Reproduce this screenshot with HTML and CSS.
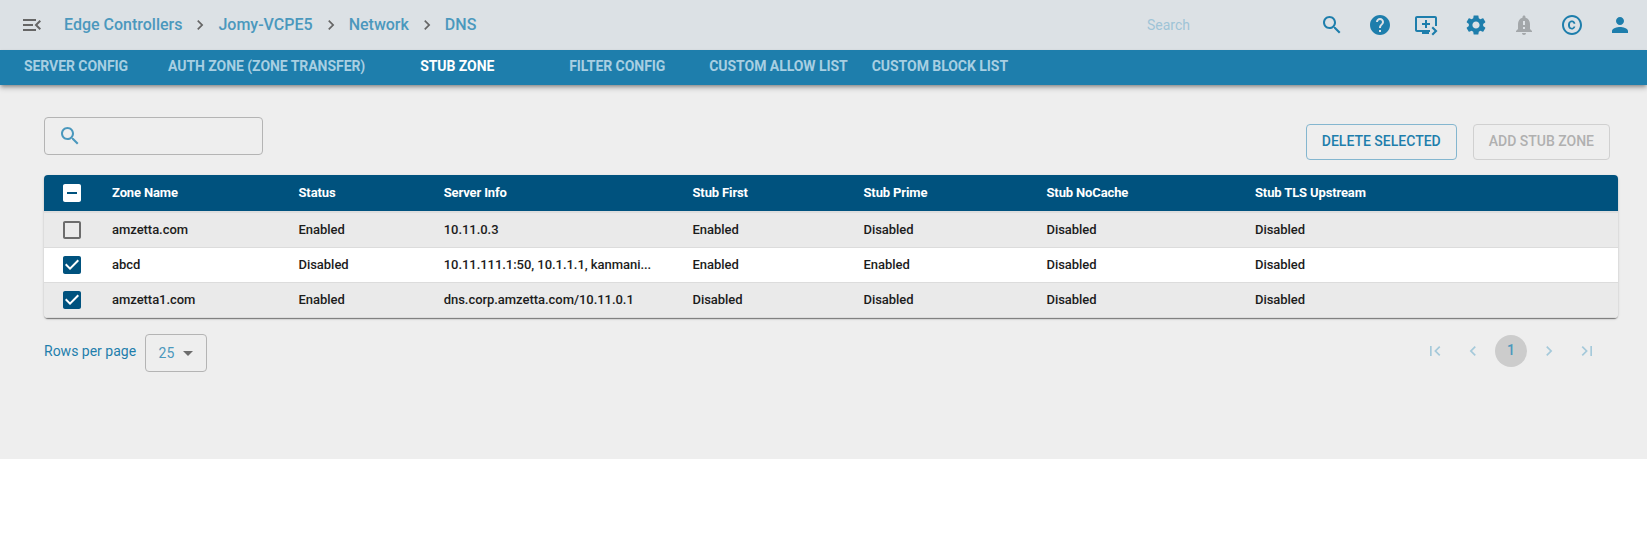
FILE: index.html
```html
<!DOCTYPE html>
<html lang="en">
<head>
<meta charset="utf-8">
<title>DNS - Stub Zone</title>
<link rel="stylesheet" href="styles.css">
</head>
<body>
<svg class="defs" aria-hidden="true">
  <symbol id="search" viewBox="0 0 24 24"><path d="M15.5 14h-.79l-.28-.27C15.41 12.59 16 11.11 16 9.5 16 5.91 13.09 3 9.5 3S3 5.91 3 9.5 5.91 16 9.5 16c1.61 0 3.09-.59 4.23-1.57l.27.28v.79l5 4.99L20.49 19l-4.99-5zm-6 0C7.01 14 5 11.99 5 9.5S7.01 5 9.5 5 14 7.01 14 9.5 11.99 14 9.5 14z"/></symbol>
  <symbol id="check" viewBox="0 0 24 24"><path d="M19 3H5c-1.11 0-2 .9-2 2v14c0 1.1.89 2 2 2h14c1.11 0 2-.9 2-2V5c0-1.1-.89-2-2-2z"/><path class="tick" d="M10 17l-5-5 1.41-1.41L10 14.17l7.59-7.59L19 8l-9 9z"/></symbol>
  <symbol id="chevron" viewBox="0 0 24 24"><path d="M10 6L8.59 7.41 13.17 12l-4.58 4.59L10 18l6-6z"/></symbol>
</svg>
<header class="topbar">
  <svg class="icon menu" viewBox="0 0 24 24"><path d="M3 18h13v-2H3v2zm0-5h10v-2H3v2zm0-7v2h13V6H3zm18 9.59L17.42 12 21 8.41 19.59 7l-5 5 5 5L21 15.59z"/></svg>
  <nav class="crumbs">
    <a>Edge Controllers</a><svg class="sep"><use href="#chevron"/></svg>
    <a>Jomy-VCPE5</a><svg class="sep"><use href="#chevron"/></svg>
    <a>Network</a><svg class="sep"><use href="#chevron"/></svg>
    <a>DNS</a>
  </nav>
  <div class="search-hint">Search</div>
  <div class="actions">
    <svg class="icon"><use href="#search"/></svg>
    <svg class="icon" viewBox="0 0 24 24"><path d="M12 2C6.48 2 2 6.48 2 12s4.48 10 10 10 10-4.48 10-10S17.52 2 12 2zm1 17h-2v-2h2v2zm2.07-7.75l-.9.92C13.45 12.9 13 13.5 13 15h-2v-.5c0-1.1.45-2.1 1.17-2.83l1.24-1.26c.37-.36.59-.86.59-1.41 0-1.1-.9-2-2-2s-2 .9-2 2H8c0-2.21 1.79-4 4-4s4 1.79 4 4c0 .88-.36 1.68-.93 2.25z"/></svg>
    <svg class="icon queue" viewBox="0 0 24 24"><path d="M13 7v3h3v2h-3v3h-2v-3H8v-2h3V7h2zm10 6h-2V5H3v12h13v2h-1v2H8v-2H3c-1.100 0-2-.9-2-2V5c0-1.100.9-2 2-2h18c1.100 0 2 .9 2 2v8zm-4 9.500L17.500 21l3-3-3-3 1.500-1.500 4.500 4.500-4.500 4.500z"/></svg>
    <svg class="icon" viewBox="0 0 24 24"><path d="M19.140 12.940c.04-.3.060-.610.060-.940 0-.320-.020-.640-.070-.940l2.030-1.580c.180-.140.230-.410.120-.610l-1.920-3.320c-.120-.220-.370-.290-.590-.220l-2.390.960c-.5-.380-1.030-.7-1.620-.940l-.360-2.540c-.040-.240-.240-.410-.480-.410h-3.840c-.240 0-.430.170-.470.410l-.360 2.540c-.590.240-1.130.570-1.620.940l-2.390-.960c-.220-.080-.470 0-.590.220L2.740 8.870c-.120.210-.080.470.120.610l2.030 1.580c-.050.300-.090.630-.090.940s.020.640.070.940l-2.030 1.580c-.180.140-.230.410-.120.610l1.920 3.320c.120.220.370.290.590.220l2.390-.960c.5.380 1.030.7 1.620.940l.36 2.540c.050.240.240.410.480.410h3.840c.240 0 .440-.170.470-.410l.36-2.540c.590-.240 1.130-.560 1.620-.940l2.390.960c.220.080.470 0 .590-.220l1.920-3.320c.120-.220.070-.470-.120-.610l-2.010-1.580zM12 15.600c-1.980 0-3.600-1.620-3.600-3.600s1.620-3.600 3.600-3.600 3.600 1.620 3.600 3.600-1.620 3.600-3.600 3.600z"/></svg>
    <svg class="icon muted" viewBox="0 0 24 24"><path d="M18 16v-5c0-3.070-1.640-5.640-4.500-6.320V4c0-.830-.670-1.500-1.500-1.500s-1.500.670-1.500 1.500v.680C7.630 5.360 6 7.920 6 11v5l-2 2v1h16v-1l-2-2zm-5 0h-2v-2h2v2zm0-4h-2V8h2v4zm-1 10c1.100 0 2-.9 2-2h-4c0 1.100.890 2 2 2z"/></svg>
    <svg class="icon" viewBox="0 0 24 24"><path d="M10.080 10.860c.050-.330.160-.620.300-.870s.340-.460.590-.620c.240-.150.540-.220.910-.230.230.010.440.050.630.130.200.090.380.210.520.360s.250.330.340.530.130.420.140.640h1.790c-.020-.470-.110-.900-.280-1.290s-.400-.730-.7-1.010-.660-.5-1.080-.660-.880-.230-1.390-.230c-.650 0-1.220.110-1.700.340s-.880.530-1.200.920-.560.840-.710 1.360S8 11.290 8 11.870v.270c0 .580.080 1.120.230 1.640s.390.970.710 1.350.720.690 1.200.910c.480.220 1.050.340 1.700.340.470 0 .910-.080 1.320-.230s.770-.360 1.080-.630.560-.580.740-.940.290-.740.300-1.150h-1.790c-.010.210-.060.400-.150.580s-.210.330-.360.460-.320.230-.520.300c-.190.070-.390.090-.6.100-.360-.010-.660-.080-.890-.230-.250-.160-.450-.370-.590-.620s-.250-.550-.300-.880-.080-.670-.080-1v-.270c0-.350.030-.680.080-1.010zM12 2C6.480 2 2 6.480 2 12s4.480 10 10 10 10-4.480 10-10S17.520 2 12 2zm0 18c-4.410 0-8-3.590-8-8s3.590-8 8-8 8 3.590 8 8-3.590 8-8 8z"/></svg>
    <svg class="icon" viewBox="0 0 24 24"><path d="M12 12c2.210 0 4-1.790 4-4s-1.790-4-4-4-4 1.790-4 4 1.790 4 4 4zm0 2c-2.670 0-8 1.340-8 4v2h16v-2c0-2.660-5.330-4-8-4z"/></svg>
  </div>
</header>
<nav class="tabs">
  <a class="tab">SERVER CONFIG</a>
  <a class="tab">AUTH ZONE (ZONE TRANSFER)</a>
  <a class="tab active">STUB ZONE</a>
  <a class="tab">FILTER CONFIG</a>
  <a class="tab">CUSTOM ALLOW LIST</a>
  <a class="tab">CUSTOM BLOCK LIST</a>
</nav>
<main class="content">
  <div class="toolbar">
    <div class="filter"><svg class="icon"><use href="#search"/></svg></div>
    <div class="buttons">
      <button class="btn">DELETE SELECTED</button>
      <button class="btn disabled" disabled>ADD STUB ZONE</button>
    </div>
  </div>
  <div class="table">
    <div class="row head">
      <svg class="box some" viewBox="0 0 24 24"><path d="M19 3H5c-1.100 0-2 .9-2 2v14c0 1.100.9 2 2 2h14c1.100 0 2-.9 2-2V5c0-1.100-.9-2-2-2zm-2 10H7v-2h10v2z"/></svg>
      <span>Zone Name</span><span>Status</span><span>Server Info</span><span>Stub First</span><span>Stub Prime</span><span>Stub NoCache</span><span>Stub TLS Upstream</span>
    </div>
    <div class="row odd first">
      <svg class="box empty" viewBox="0 0 24 24"><path d="M19 5v14H5V5h14m0-2H5c-1.100 0-2 .9-2 2v14c0 1.100.9 2 2 2h14c1.100 0 2-.9 2-2V5c0-1.100-.9-2-2-2z"/></svg>
      <span>amzetta.com</span><span>Enabled</span><span>10.11.0.3</span><span>Enabled</span><span>Disabled</span><span>Disabled</span><span>Disabled</span>
    </div>
    <div class="row">
      <svg class="box"><use href="#check"/></svg>
      <span>abcd</span><span>Disabled</span><span>10.11.111.1:50, 10.1.1.1, kanmani...</span><span>Enabled</span><span>Enabled</span><span>Disabled</span><span>Disabled</span>
    </div>
    <div class="row odd">
      <svg class="box"><use href="#check"/></svg>
      <span>amzetta1.com</span><span>Enabled</span><span>dns.corp.amzetta.com/10.11.0.1</span><span>Disabled</span><span>Disabled</span><span>Disabled</span><span>Disabled</span>
    </div>
  </div>
  <div class="footer">
    <span class="rows-label">Rows per page</span>
    <div class="select"><span class="value">25</span><svg class="icon caret" viewBox="0 0 24 24"><path d="M7 10l5 5 5-5z"/></svg></div>
    <div class="pager">
      <svg class="page-icon" viewBox="0 0 24 24"><path d="M18.410 16.590L13.820 12l4.590-4.590L17 6l-6 6 6 6zM6 6h2v12H6z"/></svg>
      <svg class="page-icon" viewBox="0 0 24 24"><path d="M15.410 7.410L14 6l-6 6 6 6 1.410-1.410L10.830 12z"/></svg>
      <span class="page">1</span>
      <svg class="page-icon"><use href="#chevron"/></svg>
      <svg class="page-icon" viewBox="0 0 24 24"><path d="M5.590 7.410L10.180 12l-4.590 4.590L7 18l6-6-6-6zM16 6h2v12h-2z"/></svg>
    </div>
  </div>
</main>
</body>
</html>
```

FILE: styles.css
```css
* { box-sizing: border-box; }
body { margin: 0; background: #fff; font-family: Roboto, "Liberation Sans", sans-serif; font-size: 14px; color: #1c1c1c; }
.defs { display: none; }
svg { fill: currentColor; flex: none; }
.icon { width: 24px; height: 24px; }

.topbar { height: 50px; background: #dce1e5; display: flex; align-items: center; padding: 0 15px 0 20px; color: #1e7eac; }
.menu { color: #666; }
.crumbs { display: flex; align-items: center; margin-left: 20px; font-size: 16px; font-weight: 500; color: #4b98bd; line-height: 24px; }
.crumbs a { white-space: nowrap; }
.sep { width: 20px; height: 20px; margin: 0 8px; color: #666; }
.search-hint { margin-left: auto; width: 173px; color: #9fc4d7; line-height: 20px; padding-bottom: 1px; }
.actions { display: flex; gap: 24px; }
.queue { margin: 0 2px 0 -2px; }
.muted { color: #a3a7aa; }

.tabs { height: 35px; background: #1e7eac; display: flex; position: relative; box-shadow: 0 2px 4px -1px rgba(0,0,0,.4), 0 4px 5px rgba(0,0,0,.14); }
.tab { min-width: 160px; padding: 0 12px; text-align: center; font-weight: 700; line-height: 32px; letter-spacing: -.05px; color: #a8cfe2; white-space: nowrap; }
.tab:first-child { margin-left: -4px; }
.tab.active { color: #fff; }

.content { height: 374px; background: #eee; padding: 32px 29px 0 44px; }
.toolbar { display: flex; justify-content: space-between; }
.filter { width: 219px; height: 38px; border: 1px solid #b4b4b4; border-radius: 4px; padding: 6px 13px; color: #4b98bd; }
.buttons { display: flex; gap: 16px; padding: 7px 8px 0 0; }
.btn { height: 36px; padding: 0 15px 2px; border: 1px solid #84b6cf; border-radius: 4px; background: none; font: 500 14px/32px Roboto, sans-serif; color: #1e7eac; }
.btn.disabled { border-color: #d0d0d0; color: #b0b0b0; }

.table { margin-top: 15px; border-radius: 4px; box-shadow: 0 2px 1px -1px rgba(0,0,0,.3), 0 1px 1px rgba(0,0,0,.2), 0 1px 3px rgba(0,0,0,.14); overflow: hidden; }
.row { display: grid; grid-template-columns: 68px 186.500px 145.200px 248.800px 171px 183px 208.500px 1fr; align-items: center; height: 35px; border-bottom: 1px solid #dcdcdc; background: #fff; font-size: 13px; font-weight: 500; letter-spacing: -.04px; }
.row span { line-height: 20px; white-space: nowrap; }
.head { height: 36px; background: #00527e; color: #fff; font-weight: 700; border: 0; letter-spacing: -.13px; }
.odd { background: #eaeaea; }
.first { height: 37px; border-top: 2px solid #dedede; }
.box { width: 24px; height: 24px; margin-left: 16px; color: #00527e; }
.some { color: #fff; }
.empty { color: #6c6c6c; }
.tick { fill: #fff; }

.footer { display: flex; margin-top: 16px; }
.rows-label { line-height: 34px; color: #1e7eac; margin-right: 9px; }
.select { display: flex; align-items: center; width: 62px; height: 38px; padding-left: 12.500px; border: 1px solid #b4b4b4; border-radius: 4px; color: #4b98bd; }
.value { padding-bottom: 1px; letter-spacing: .15px; }
.caret { color: #6c6c6c; margin-left: 1px; }
.pager { margin: 1px 21px 0 auto; display: flex; align-items: center; height: 32px; gap: 18px; color: #a5c9da; }
.page-icon { width: 20px; height: 20px; }
.page { width: 32px; height: 32px; border-radius: 50%; background: #ccc; text-align: center; line-height: 30px; font-weight: 500; color: #4b98bd; margin: 0 -6px; }
```
